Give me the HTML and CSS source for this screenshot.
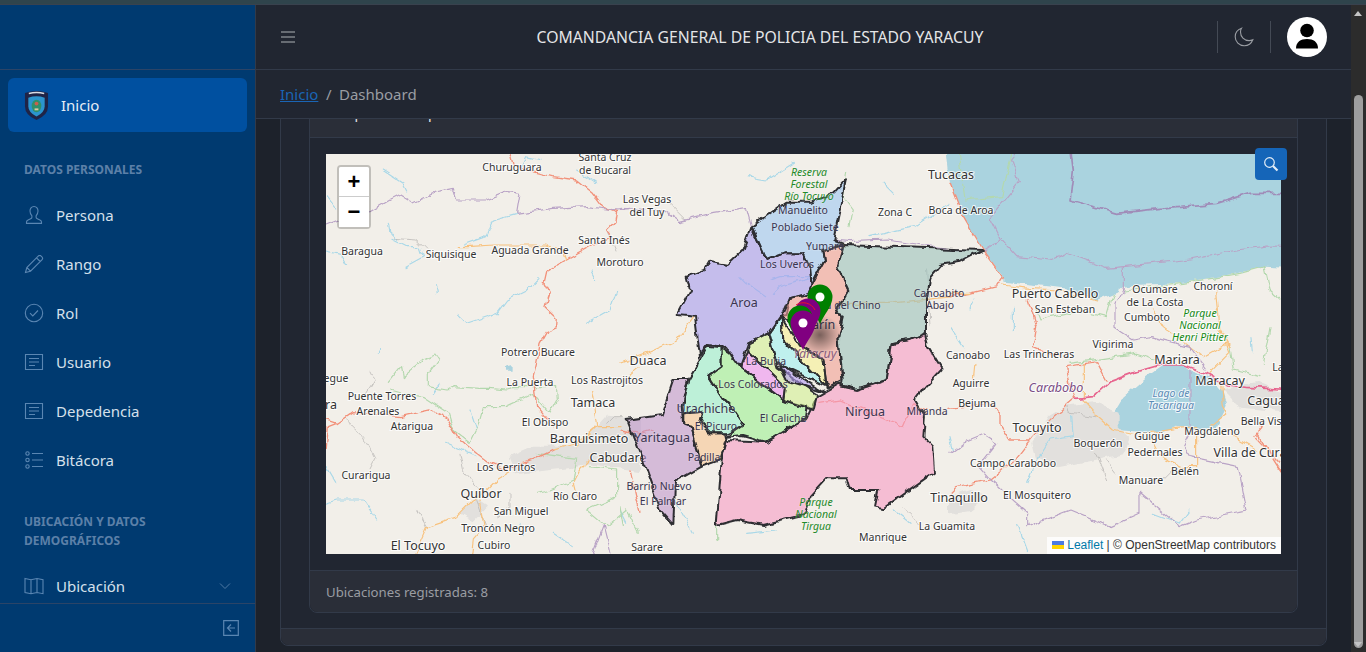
FILE: index.html
```html
<!DOCTYPE html>
<html lang="es">
<head>
  <meta charset="UTF-8">
  <meta name="viewport" content="width=device-width, initial-scale=1.0">
  <title>Comandancia General de Policia</title>
  <link rel="stylesheet" href="styles.css">
</head>
<body>
  <div class="top-strip"></div>
  <div class="layout">

    <!-- Sidebar -->
    <aside class="sidebar">
      <div class="sidebar-brand"></div>
      <nav class="sidebar-nav">
        <a class="nav-item active">
          <svg class="logo" viewBox="0 0 26 32">
            <path d="M1 3 Q13 -1 25 3 V17 Q25 26 13 31 Q1 26 1 17Z" fill="#1f2447"/>
            <path d="M4.500 8 Q13 5 21.500 8 V17 Q21.500 23 13 27.500 Q4.500 23 4.500 17Z" fill="#2b95cf"/>
            <ellipse cx="13" cy="16.500" rx="5" ry="6.500" fill="#2f8f6b"/>
            <circle cx="13" cy="14" r="2" fill="#c9604d"/>
            <path d="M11 19h4v2h-4z" fill="#d8c9a0"/>
            <path d="M5 3.500 Q13 1.500 21 3.500" stroke="#d9dde5" stroke-width="1.400" fill="none"/>
          </svg>
          <span>Inicio</span>
        </a>

        <div class="nav-title">DATOS PERSONALES</div>
        <a class="nav-item">
          <svg class="nav-icon" viewBox="0 0 20 20"><path d="M10 1.500c-2.600 0-4 2-4 4.600 0 2 .8 3.600 1.900 4.700v1.500c0 .8-.5 1.200-1.200 1.500l-2.600 1.100c-1 .4-1.600 1.100-1.600 2.100v1.400h15v-1.400c0-1-.6-1.700-1.600-2.100l-2.600-1.100c-.7-.3-1.200-.7-1.200-1.500v-1.500c1.100-1.100 1.900-2.700 1.900-4.700 0-2.600-1.400-4.600-4-4.600z"/></svg>
          <span>Persona</span>
        </a>
        <a class="nav-item">
          <svg class="nav-icon" viewBox="0 0 20 20"><path d="M1.500 18.500l1.300-5L14.200 2.100c.9-.9 2.200-.9 3 0l.7.7c.9.9.9 2.100 0 3L6.500 17.200zM2.800 13.500l3.700 3.700M12.500 3.800l3.700 3.700"/></svg>
          <span>Rango</span>
        </a>
        <a class="nav-item">
          <svg class="nav-icon" viewBox="0 0 20 20"><circle cx="10" cy="10" r="8.700"/><path d="M6 10.200l2.800 2.800 5.200-5.500"/></svg>
          <span>Rol</span>
        </a>
        <a class="nav-item">
          <svg class="nav-icon" viewBox="0 0 20 20"><path d="M1.500 2.500h17v15h-17zM5 6.500h10M5 10h10M5 13.500h6"/></svg>
          <span>Usuario</span>
        </a>
        <a class="nav-item">
          <svg class="nav-icon" viewBox="0 0 20 20"><path d="M1.500 2.500h17v15h-17zM5 6.500h10M5 10h10M5 13.500h6"/></svg>
          <span>Depedencia</span>
        </a>
        <a class="nav-item">
          <svg class="nav-icon" viewBox="0 0 20 20"><circle cx="3.500" cy="3.500" r="1.700"/><circle cx="3.500" cy="10" r="1.700"/><circle cx="3.500" cy="16.500" r="1.700"/><path d="M8 3.500h11M8 10h11M8 16.500h11"/></svg>
          <span>Bitácora</span>
        </a>

        <div class="nav-title two-lines">UBICACIÓN Y DATOS DEMOGRÁFICOS</div>
        <a class="nav-item">
          <svg class="nav-icon" viewBox="0 0 20 20"><path d="M1 2.500l6 1.200 6-1.200 6 1.200v14l-6-1.200-6 1.200-6-1.200zM7 3.700v14M13 2.500v14"/></svg>
          <span>Ubicación</span>
          <svg class="nav-caret" viewBox="0 0 12 12"><path d="M1 3.500l5 5 5-5"/></svg>
        </a>
      </nav>
      <div class="sidebar-footer">
        <svg class="collapse-icon" viewBox="0 0 16 16"><path d="M.7 .7h14.600v14.600H.7zM12 8H4.500M8 4.500L4.500 8 8 11.500"/></svg>
      </div>
    </aside>

    <div class="main">
      <!-- Header -->
      <header class="header">
        <svg class="burger" viewBox="0 0 16 16"><path d="M1 3h14M1 8h14M1 13h14"/></svg>
        <div class="header-title">COMANDANCIA GENERAL DE POLICIA DEL ESTADO YARACUY</div>
        <div class="header-tools">
          <span class="vr"></span>
          <svg class="moon" viewBox="0 0 20 20"><path d="M7.500 1.200C4 2.400 1.200 5.600 1.200 9.800c0 5 4 9 9 9 4 0 7.300-2.600 8.600-6-1.200.5-2.400.8-3.700.8-5 0-8.600-3.900-8.600-8.600 0-1.400.3-2.700 1-3.800z"/></svg>
          <span class="vr"></span>
          <div class="avatar">
            <svg viewBox="0 0 40 40"><circle cx="20" cy="13.500" r="6.800"/><path d="M9 31.500c0-6.500 4.500-9.500 11-9.500s11 3 11 9.500z"/></svg>
          </div>
        </div>
      </header>

      <div class="breadcrumb">
        <a class="crumb-link">Inicio</a>
        <span class="crumb-sep">/</span>
        <span>Dashboard</span>
      </div>

      <div class="content">
        <div class="outer-card">
          <div class="outer-body">
            <div class="inner-card">
              <div class="inner-header">Mapa de la Dependencia</div>
              <div class="inner-body">
                <button class="search-btn">
                  <svg viewBox="0 0 16 16"><circle cx="6.500" cy="6.500" r="4.800"/><path d="M10 10l4.500 4.500" stroke-width="2.200"/></svg>
                </button>
                <div class="map">
                  <svg class="map-svg" viewBox="326 154 955 400" width="955" height="400">
                    <defs>
                      <radialGradient id="pin-shadow">
                        <stop offset="0" stop-color="#000" stop-opacity=".5"/>
                        <stop offset="1" stop-color="#000" stop-opacity="0"/>
                      </radialGradient>
                      <filter id="wiggle" filterUnits="userSpaceOnUse" x="306" y="134" width="995" height="440">
                        <feTurbulence type="fractalNoise" baseFrequency=".09" numOctaves="2" seed="4"/>
                        <feDisplacementMap in="SourceGraphic" scale="7" xChannelSelector="R" yChannelSelector="G"/>
                        <feGaussianBlur stdDeviation=".25"/>
                      </filter>
                      <g id="pin-head"><path d="M0 27C-3 19-12.500 9-12.500 0A12.500 12.500 0 1 1 12.500 0C12.500 9 3 19 0 27Z"/></g>
                    </defs>

                    <g filter="url(#wiggle)">
                      <!-- land features, west part -->
                      <g transform="translate(320 150) scale(.3333)" fill="none" stroke-linejoin="round" stroke-linecap="round">
                        <path class="urban" d="M570 920L640 890 780 890 860 800 960 810 960 960 810 940 760 950 660 960 590 970Z"/>
                        <path class="urban" d="M425 1090L470 1050 500 1070 460 1110Z"/>
                        <path class="river" d="M18 300L60 310 80 345M210 265L260 290 300 290 310 320 255 350M440 520L410 490M440 520L530 490 560 450 620 420 660 380M800 520L870 480 890 420M590 190L520 210 500 260 430 285M205 220L210 250 230 270M18 1060L50 1050 130 1050 170 1110M190 60L250 100 260 120M18 140L50 180M660 30L620 20 600 60M770 60L830 100M350 410L355 430M20 950L50 1000M380 880L470 920M450 780L470 840M600 1120L610 1160M700 1150L760 1190M815 360L830 390M180 600L175 610M360 700L340 730"/>
                        <path d="M555 650L575 645 575 665 555 665Z" fill="#abd3df"/>
                        <path class="park" d="M205 700L245 650 250 680 310 630 345 615 355 630 325 670 325 710 380 720 400 710 480 715 510 715 560 720 580 710 710 710 712 750 690 790 640 730 555 770 490 770 470 840 450 880 400 840 385 790 310 740 250 730 215 720M650 910L770 925 760 990 690 1020 650 1030M810 950L890 960 890 1040 800 1080 860 1130 920 1080 955 1150"/>
                        <path class="minor" d="M150 660L165 690 140 730M80 810L130 860 165 930 150 960M420 910L430 960 480 1020M570 1030L570 1070 530 1100M290 1080L320 1130M220 265L290 270 320 300M860 240L885 300M860 820L880 800 910 800M470 1050L500 1130"/>
                        <path class="road" d="M570 12L580 50 700 80 770 90 820 130 850 170 890 185 885 215 860 240 875 262 830 280 740 330 680 365 672 400 688 430 675 470 712 505 710 530 680 545 660 580 650 640 640 680 650 770 700 830M18 810L50 820 100 785 240 800 330 780 380 805 410 860 470 910 510 940 560 960 640 930 700 900M18 900L25 830 50 820M930 960L960 1090"/>
                        <path class="road-sec" d="M410 290L440 290 520 285 580 285 680 285 730 300 740 330M320 1130L410 1100 460 1050 480 1040 530 990 570 965M480 1050L495 1130 460 1170 455 1210M285 1210L320 1130M815 720L830 830 770 890M700 900L770 880 830 830 900 830M810 930L780 960 760 1000 770 1040M925 680L960 650"/>
                        <path class="border" d="M18 225L80 200 150 185 210 150 240 135 280 160 350 125 400 115 410 150 500 150 560 125 600 130 590 190 700 175 800 170 890 180 930 175M820 1210L850 1130 870 1210"/>
                      </g>

                      <!-- land features, middle part -->
                      <g transform="translate(620 170) scale(.3333)" fill="none" stroke-linejoin="round" stroke-linecap="round">
                        <path class="river" d="M380 20L440 30 520 -20M790 40L820 70M750 200L880 170 990 100M440 380L380 340 360 320M450 330L480 320 570 320M460 370L480 350 570 325M0 1020L20 1060M380 1090L470 1080M820 1020L870 1060M170 1000L220 1090"/>
                        <path class="park" d="M680 0L670 80 700 120 690 170M0 1010L10 1070M290 1065L290 1110"/>
                        <path class="road-sec" d="M0 580L80 550 170 510 220 440M650 400L800 400 1000 380"/>
                        <path class="minor" d="M140 90L200 150M920 300L930 470M850 1010L900 1060"/>
                        <path class="border" d="M0 115L130 120 180 155 280 130 380 115 395 170M640 210L690 215 800 210 1020 240M500 95L575 95"/>
                        <path class="road" d="M0 780L60 790 100 780M600 700L660 690 780 740 850 770 880 700 915 720"/>
                      </g>

                      <!-- sea, lake and east part -->
                      <g transform="translate(950 150) scale(.3333)" fill="none" stroke-linejoin="round" stroke-linecap="round">
                        <path d="M-15 -40L0 100 35 190 100 300 160 375 160 395 260 405 340 415 440 450 500 425 520 410 550 405 690 400 860 370 945 350 1040 355 1040 -40Z" fill="#aad3df"/>
                        <path d="M490 790L520 740 590 680 640 645 700 645 720 660 780 680 815 720 830 770 800 830 740 840 680 830 640 845 570 845 500 840Z" fill="#aad3df"/>
                        <path class="urban" d="M250 880L300 800 350 770 430 760 500 790 500 830 540 870 520 910 420 930 320 950 260 920Z"/>
                        <path class="urban" d="M0 1040L60 1020 110 1040 60 1080 0 1090Z"/>
                        <path class="urban" d="M820 720L920 700 993 730 993 780 870 770Z"/>
                        <path class="river" d="M75 450L60 480M190 470L190 540M0 530L40 590M365 800L370 860 300 870 250 950 230 1000M900 560L905 610M0 860L10 900M610 1090L690 1120 720 1080M200 1120L230 1200"/>
                        <path class="park" d="M25 12L45 150 155 140 185 12M255 470L270 510 300 500 390 480 470 500 490 430M520 420L700 400 870 370 945 350 960 420 993 450M360 640L560 610 620 630M840 590L850 660 930 680M960 530L940 640"/>
                        <path class="minor" d="M350 770L360 790 440 800M440 910L470 990M470 930L500 970M640 990L670 960"/>
                        <path class="road" d="M0 100L35 190 100 300 160 380 140 410 60 430 0 440M235 450L260 530 250 590 330 620M350 650L440 635 470 690M350 650L360 710 375 745M375 745L310 800 250 860 200 925 120 990 20 1010 0 1030M0 775L110 760 150 790 150 825 180 870 240 870M920 850L990 960M940 830L915 860 990 940"/>
                        <path class="road-sec" d="M155 405L240 415 320 420 440 450M400 640L400 750 440 795 490 840 560 855 680 835 740 830 740 950 690 950 630 920 605 870M815 700L820 770 830 790 780 830M780 670L840 610 830 580 760 620 720 590 640 530 610 480M800 420L810 540 840 590M75 640L70 690M850 860L920 900M0 430L60 430"/>
                        <path class="motorway" d="M375 745L430 740 480 695 560 665 630 645 700 645 770 670 830 705 890 712 1040 720"/>
                        <path class="border" d="M120 205L205 100 185 30 200 12M120 205L150 265 200 320 300 330 350 310 470 355 520 350 700 330 860 300 950 288 1040 290M100 300L155 265M520 350L520 415 495 460 495 535 550 570 600 560 680 580 720 590 770 660M0 910L40 880 100 855 140 880 85 950 120 990 230 1090 230 1130 360 1080 480 1130 570 1090 570 1030 690 1130 740 1110 890 1080 865 950 720 920 700 890 720 850 720 660"/>
                        <path class="border thick" d="M360 -20L370 60 360 150 500 190 680 170 800 160 900 130 1040 130"/>
                      </g>
                    </g>

                    <!-- place names -->
                    <g class="labels">
                      <text x="512" y="171">Churuguara</text>
                      <text x="605" y="161">Santa Cruz</text>
                      <text x="605" y="174">de Bucaral</text>
                      <text x="647" y="203">Las Vegas</text>
                      <text x="647" y="216">del Tuy</text>
                      <text x="362" y="255">Baragua</text>
                      <text x="451" y="258">Siquisique</text>
                      <text x="530" y="254">Aguada Grande</text>
                      <text x="604" y="244">Santa Inés</text>
                      <text x="620" y="266">Moroturo</text>
                      <text x="895" y="216">Zona C</text>
                      <text x="961" y="214">Boca de Aroa</text>
                      <text x="1065" y="313">San Esteban</text>
                      <text x="1155" y="293">Ocumare</text>
                      <text x="1155" y="306">de La Costa</text>
                      <text x="1213" y="290">Choroní</text>
                      <text x="1147" y="321">Cumboto</text>
                      <text x="1113" y="348">Vigirima</text>
                      <text x="968" y="359">Canoabo</text>
                      <text x="1039" y="358">Las Trincheras</text>
                      <text x="971" y="387">Aguirre</text>
                      <text x="977" y="407">Bejuma</text>
                      <text x="1098" y="447">Boquerón</text>
                      <text x="1152" y="440">Güigüe</text>
                      <text x="1212" y="435">Magdaleno</text>
                      <text x="1266" y="425">Bella Vista</text>
                      <text x="1155" y="456">Pedernales</text>
                      <text x="1185" y="475">Belén</text>
                      <text x="1141" y="484">Manuare</text>
                      <text x="1013" y="467">Campo Carabobo</text>
                      <text x="1037" y="499">El Mosquitero</text>
                      <text x="947" y="530">La Guamita</text>
                      <text x="883" y="541">Manrique</text>
                      <text x="647" y="551">Sarare</text>
                      <text x="494" y="549">Cubiro</text>
                      <text x="498" y="532">Troncón Negro</text>
                      <text x="521" y="515">San Miguel</text>
                      <text x="575" y="500">Río Claro</text>
                      <text x="366" y="479">Curarigua</text>
                      <text x="506" y="471">Los Cerritos</text>
                      <text x="545" y="426">El Obispo</text>
                      <text x="412" y="430">Atarigua</text>
                      <text x="378" y="415">Arenales</text>
                      <text x="382" y="400">Puente Torres</text>
                      <text x="336" y="382">egue</text>
                      <text x="530" y="386">La Puerta</text>
                      <text x="607" y="384">Los Rastrojitos</text>
                      <text x="538" y="356">Potrero Bucare</text>
                      <text x="1278" y="371">La</text>

                      <g class="big">
                        <text x="951" y="179">Tucacas</text>
                        <text x="1055" y="298">Puerto Cabello</text>
                        <text x="1177" y="364">Mariara</text>
                        <text x="1220" y="385">Maracay</text>
                        <text x="1266" y="405">Cagua</text>
                        <text x="1037" y="432">Tocuyito</text>
                        <text x="1250" y="457">Villa de Cura</text>
                        <text x="959" y="502">Tinaquillo</text>
                        <text x="418" y="550">El Tocuyo</text>
                        <text x="481" y="498">Quíbor</text>
                        <text x="618" y="462">Cabudare</text>
                        <text x="589" y="443">Barquisimeto</text>
                        <text x="593" y="407">Tamaca</text>
                        <text x="331" y="409">ra</text>
                        <text x="648" y="365">Duaca</text>
                      </g>

                      <g class="green">
                        <text x="1200" y="317">Parque</text>
                        <text x="1200" y="329">Nacional</text>
                        <text x="1200" y="341">Henri Pittier</text>
                      </g>
                      <g class="water">
                        <text x="1171" y="397">Lago de</text>
                        <text x="1171" y="409">Tacarigua</text>
                      </g>
                      <text class="state" x="1056" y="392">Carabobo</text>
                    </g>

                    <!-- municipalities -->
                    <g filter="url(#wiggle)">
                      <g class="municipios" transform="translate(620 170) scale(.3333)">
                        <path fill="#a79cee" d="M395 170L440 270 490 250 550 250 570 290 575 345 565 370 510 385 500 435 480 440 445 490 385 520 360 590 325 540 305 530 265 525 240 560 225 440 170 435 210 360 200 320 255 300 270 275 320 285 370 240Z"/>
                        <path fill="#9dc7f1" d="M395 170L500 95 575 95 640 70 678 28 640 210 670 222 640 235 610 240 615 270 590 315 575 345 570 290 550 250 490 250 440 270Z"/>
                        <path fill="#f29f92" d="M610 240L660 228 670 225 655 290 688 360 648 432 668 440 655 500 668 630 620 655 610 570 540 530 540 480 485 440 510 385 565 370 575 345 590 315 615 270Z"/>
                        <path fill="#9bc2ba" d="M670 225L1086 240 1020 275 960 285 930 320 918 380 918 490 870 510 815 520 810 560 800 630 710 660 665 650 668 630 655 500 668 440 648 432 688 360 655 290Z"/>
                        <path fill="#f79cc4" d="M915 490L925 530 965 595 915 650 885 690 915 740 910 800 940 830 945 905 860 965 790 1015 765 1010 775 960 690 960 680 925 620 925 570 980 550 1035 430 1065 350 1050 290 1065 305 870 320 810 440 815 560 745 590 680 660 640 665 650 710 660 800 630 810 560 815 520 870 510Z"/>
                        <path fill="#c298cd" d="M20 750L125 735 160 630 205 630 185 710 190 765 215 770 245 890 165 935 160 1065 120 1020 95 950 60 850Z"/>
                        <path fill="#f7c492" d="M190 730L250 725 240 760 270 790 315 790 320 810 300 870 245 890 215 770 190 765Z"/>
                        <path fill="#9af1cd" d="M205 630L265 530 305 535 305 590 265 620 310 690 340 720 370 765 320 790 270 790 240 760 250 725 190 730 185 710Z"/>
                        <path fill="#9df192" d="M305 535L330 550 360 590 490 690 560 710 555 745 440 815 370 795 320 800 370 765 340 720 310 690 265 620 305 590Z"/>
                        <path fill="#ef93f1" d="M385 545L495 650 490 690 360 590Z"/>
                        <path fill="#d2f192" d="M385 520L445 490 470 590 590 670 590 680 580 720 490 690 495 650 385 545Z"/>
                        <path fill="#9df1f1" d="M445 490L485 440 490 510 620 650 470 580Z"/>
                        <path fill="#b49df5" d="M475 580L610 665 500 630Z"/>
                        <path fill="#f7f192" d="M485 445L540 530 610 570 620 650 490 510Z"/>
                      </g>
                    </g>

                    <!-- names seen through the municipalities -->
                    <g class="labels inside">
                      <text x="803" y="214">Manuelito</text>
                      <text x="805" y="231">Poblado Siete</text>
                      <text x="825" y="250">Yumare</text>
                      <text x="787" y="268">Los Uveros</text>
                      <text x="939" y="297">Canoabito</text>
                      <text x="940" y="309">Abajo</text>
                      <text x="846" y="309">Rica del Chino</text>
                      <text x="753" y="388">Los Colorados</text>
                      <text x="766" y="365">La Buria</text>
                      <text x="783" y="422">El Caliche</text>
                      <text x="716" y="430">El Picuro</text>
                      <text x="927" y="415">Miranda</text>
                      <text x="704" y="461">Padilla</text>
                      <text x="659" y="490">Barrio Nuevo</text>
                      <text x="663" y="505">El Palmar</text>
                      <g class="big">
                        <text x="662" y="442">Yaritagua</text>
                        <text x="744" y="307">Aroa</text>
                        <text x="706" y="413">Urachiche</text>
                        <text x="865" y="416">Nirgua</text>
                        <text x="818" y="329">Marín</text>
                      </g>
                      <g class="green">
                        <text x="809" y="176">Reserva</text>
                        <text x="809" y="188">Forestal</text>
                        <text x="809" y="200">Río Tocuyo</text>
                        <text x="816" y="506">Parque</text>
                        <text x="816" y="518">Nacional</text>
                        <text x="816" y="530">Tirgua</text>
                      </g>
                      <text class="state" x="815" y="358">Yaracuy</text>
                    </g>

                    <!-- markers -->
                    <ellipse cx="820" cy="335" rx="22" ry="20" fill="url(#pin-shadow)"/>
                    <use href="#pin-head" x="820" y="297" fill="#008000"/>
                    <circle cx="820" cy="297" r="4.500" fill="#fff"/>
                    <use href="#pin-head" x="808" y="311" fill="#800080"/>
                    <path d="M796 305A13 13 0 0 1 815 310" fill="none" stroke="#e8122a" stroke-width="1"/>
                    <use href="#pin-head" x="800" y="318" fill="#008000"/>
                    <use href="#pin-head" x="803" y="323" fill="#800080"/>
                    <circle cx="803" cy="323" r="4.500" fill="#fff"/>
                  </svg>

                  <div class="zoom-ctl">
                    <button class="zoom-btn zoom-in">+</button>
                    <button class="zoom-btn">&minus;</button>
                  </div>
                  <div class="attribution">
                    <svg class="flag" viewBox="0 0 12 8"><rect width="12" height="4" fill="#4C7BE1"/><rect y="4" width="12" height="4" fill="#FFD500"/></svg>
                    <a>Leaflet</a> | &copy; OpenStreetMap contributors
                  </div>
                </div>
              </div>
              <div class="inner-footer">Ubicaciones registradas: 8</div>
            </div>
          </div>
          <div class="outer-footer"></div>
        </div>
      </div>
    </div>

    <!-- Window scrollbar -->
    <div class="scrollbar">
      <span class="arrow-up"></span>
      <div class="thumb"></div>
      <span class="arrow-down"></span>
    </div>
  </div>
</body>
</html>
```

FILE: styles.css
```css
* {
  box-sizing: border-box;
}
html, body {
  height: 100%;
}
body {
  margin: 0;
  overflow: hidden;
  display: flex;
  flex-direction: column;
  background-color: #1d222b;
  color: #c9ccd1;
  font-family: "Noto Sans", sans-serif;
  font-size: 14px;
}
.top-strip {
  height: 5px;
  background-color: #2f444c;
  border-bottom: 1px solid #39424e;
}
.layout {
  flex: 1;
  display: flex;
  min-height: 0;
}

/* sidebar */
.sidebar {
  width: 256px;
  display: flex;
  flex-direction: column;
  background-color: #003a70;
  border-right: 1px solid #323a49;
}
.sidebar-brand {
  height: 65px;
  border-bottom: 1px solid #2b4467;
}
.sidebar-nav {
  flex: 1;
  min-height: 0;
  overflow: hidden;
  padding: 8px;
}
.nav-item {
  display: flex;
  align-items: center;
  gap: 12px;
  height: 49px;
  padding: 0 16px;
  color: #d5e0eb;
  font-size: 15px;
}
.nav-item.active {
  height: 54px;
  background-color: #0050a0;
  border-radius: 6px;
  color: #e6eef6;
}
.logo {
  width: 25px;
  height: 31px;
}
.nav-icon {
  width: 20px;
  height: 20px;
  flex: none;
  fill: none;
  stroke: #5a86b2;
  stroke-width: 1.1;
}
.nav-caret {
  width: 12px;
  height: 12px;
  margin-left: auto;
  fill: none;
  stroke: #4f79a4;
  stroke-width: 1;
}
.nav-title {
  padding: 27.5px 16px 12px;
  line-height: 19px;
  color: #5c80a8;
  font-size: 12px;
  font-weight: 700;
}
.nav-title.two-lines {
  padding-bottom: 11px;
}
.sidebar-footer {
  height: 49px;
  display: flex;
  align-items: center;
  justify-content: flex-end;
  padding-right: 16px;
  border-top: 1px solid #2b4467;
}
.collapse-icon {
  width: 16px;
  height: 16px;
  fill: none;
  stroke: #5a86b2;
  stroke-width: 1.2;
}

/* header */
.main {
  flex: 1;
  min-width: 0;
  display: flex;
  flex-direction: column;
}
.header {
  height: 65px;
  flex: none;
  display: flex;
  align-items: center;
  padding: 0 24px;
  background-color: #212631;
  border-bottom: 1px solid #323a49;
}
.burger {
  width: 16px;
  height: 16px;
  fill: none;
  stroke: #aeb1b6;
  stroke-width: 1.2;
}
.header-title {
  flex: 1;
  padding-left: 7px;
  text-align: center;
  color: #e4e5e7;
  font-size: 15.75px;
}
.header-tools {
  display: flex;
  align-items: center;
  gap: 16px;
}
.vr {
  width: 1px;
  height: 32px;
  background-color: #444a55;
}
.moon {
  width: 20px;
  height: 20px;
  fill: none;
  stroke: #9a9da3;
  stroke-width: 1.1;
}
.avatar {
  width: 40px;
  height: 40px;
  border-radius: 50%;
  background-color: #fff;
}
.avatar svg {
  display: block;
  fill: #000;
}
.breadcrumb {
  height: 49px;
  flex: none;
  display: flex;
  align-items: center;
  gap: 7.5px;
  padding: 0 24px;
  background-color: #212631;
  border-bottom: 1px solid #323a49;
  color: #9a9da3;
  font-size: 15px;
  position: relative;
  z-index: 1;
}
.crumb-link {
  color: #1a65b5;
  text-decoration: underline;
}

/* page content */
.content {
  flex: 1;
  min-height: 0;
  overflow: hidden;
  padding: 0 24px;
}
.outer-card {
  margin-top: -40px;
  background-color: #212631;
  border: 1px solid #323a49;
  border-radius: 8px;
}
.outer-body {
  padding: 20px 28px 15px;
}
.outer-footer {
  height: 17px;
  background-color: #2a2e38;
  border-top: 1px solid #323a49;
  border-radius: 0 0 8px 8px;
}
.inner-card {
  border: 1px solid #323a49;
  border-radius: 8px;
  background-color: #212631;
}
.inner-header {
  height: 37px;
  padding: 2px 16px 0 24px;
  background-color: #2a2e38;
  border-bottom: 1px solid #323a49;
  color: #e4e5e7;
  font-size: 14px;
}
.inner-body {
  position: relative;
  padding: 16px;
}
.inner-footer {
  height: 42px;
  padding: 0 16px;
  display: flex;
  align-items: center;
  background-color: #2a2e38;
  border-top: 1px solid #323a49;
  border-radius: 0 0 8px 8px;
  color: #9a9da3;
  font-size: 13.2px;
}
.search-btn {
  position: absolute;
  top: 10px;
  right: 10px;
  z-index: 2;
  width: 32px;
  height: 32px;
  padding: 8px;
  background-color: #1565b8;
  border: none;
  border-radius: 4px;
}
.search-btn svg {
  display: block;
  width: 16px;
  height: 16px;
  fill: none;
  stroke: #e3edf7;
  stroke-width: 1.2;
}

/* map */
.map {
  position: relative;
  height: 400px;
  overflow: hidden;
  background-color: #f2efe9;
}
.map-svg {
  display: block;
}
.urban {
  fill: #e2e0dd;
  stroke: #e2e0dd;
  stroke-width: 6;
}
.river {
  stroke: #a9d8e8;
  stroke-width: 3.5;
}
.park {
  stroke: #b4d8ae;
  stroke-width: 3.5;
}
.minor {
  stroke: #bdbbb8;
  stroke-width: 2.5;
}
.road {
  stroke: #f2917a;
  stroke-width: 4;
}
.road-sec {
  stroke: #f8c27e;
  stroke-width: 3.5;
}
.motorway {
  stroke: #e7668f;
  stroke-width: 5;
}
.border {
  stroke: #b9a3c6;
  stroke-width: 3.5;
}
.border.thick {
  stroke: #a08cb8;
  stroke-width: 5;
}
.labels text {
  fill: #333;
  font-family: "Noto Sans", sans-serif;
  font-size: 10.5px;
  text-anchor: middle;
  paint-order: stroke;
  stroke: rgba(255, 255, 255, .8);
  stroke-width: 2px;
}
.labels .big text {
  font-size: 12.5px;
}
.labels .green text {
  fill: #178a17;
  font-style: italic;
}
.labels .water text {
  fill: #5a8ab5;
  font-style: italic;
}
.labels .state {
  fill: #7a4d85;
  font-size: 12.5px;
  font-style: italic;
}
.labels.inside text {
  fill: #3a3550;
  stroke: rgba(255, 255, 255, .15);
}
.labels.inside .green text {
  fill: #1f8a2a;
}
.labels.inside .state {
  fill: #8a5f80;
}
.municipios path {
  fill-opacity: .6;
  stroke: #2f2f33;
  stroke-width: 6;
  stroke-linejoin: round;
}
.zoom-ctl {
  position: absolute;
  top: 11px;
  left: 11px;
  width: 34px;
  border: 2px solid rgba(0, 0, 0, .2);
  border-radius: 4px;
  background-clip: padding-box;
}
.zoom-btn {
  display: block;
  width: 30px;
  height: 30px;
  padding: 0;
  background-color: #fff;
  border: none;
  color: #000;
  font-family: "Liberation Sans", sans-serif;
  font-size: 22px;
  font-weight: 700;
  line-height: 30px;
}
.zoom-in {
  border-bottom: 1px solid #ccc;
  border-radius: 2px 2px 0 0;
}
.attribution {
  position: absolute;
  right: 0;
  bottom: 0;
  padding: 0 5px;
  height: 17px;
  line-height: 17px;
  background-color: rgba(255, 255, 255, .8);
  color: #333;
  font-family: "Liberation Sans", sans-serif;
  font-size: 12px;
  white-space: nowrap;
}
.attribution a {
  color: #0078a8;
}
.flag {
  width: 12px;
  height: 8px;
}

/* scrollbar */
.scrollbar {
  width: 15px;
  flex: none;
  position: relative;
  background-color: #2c2c2c;
}
.thumb {
  position: absolute;
  top: 90px;
  left: 3px;
  width: 9px;
  height: 553px;
  border-radius: 5px;
  background-color: #9e9e9e;
}
.arrow-up, .arrow-down {
  position: absolute;
  left: 3px;
  border-left: 4.5px solid transparent;
  border-right: 4.5px solid transparent;
}
.arrow-up {
  top: 6px;
  border-bottom: 5px solid #c4c4c4;
}
.arrow-down {
  bottom: 5px;
  border-top: 5px solid #c4c4c4;
}
```
